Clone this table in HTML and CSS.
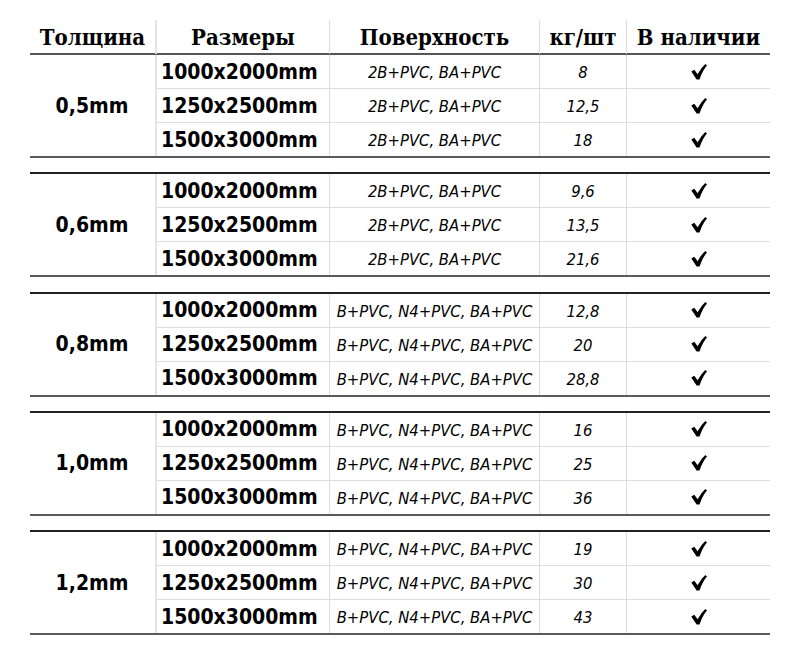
FILE: index.html
```html
<!DOCTYPE html>
<html lang="ru">
<head>
<meta charset="utf-8">
<title>Таблица</title>
<link rel="stylesheet" href="styles.css">
</head>
<body>
<div class="table">
  <div class="head">
    <div class="hc c1">Толщина</div>
    <div class="hc c2">Размеры</div>
    <div class="hc c3">Поверхность</div>
    <div class="hc c4">кг/шт</div>
    <div class="hc c5">В наличии</div>
  </div>

  <div class="group first">
    <div class="thick">0,5mm</div>
    <div class="size">1000x2000mm</div><div class="surf">2B+PVC, BA+PVC</div><div class="kg">8</div><div class="ok"><svg class="chk" viewBox="0 0 16 16"><path d="M0.3 7.6 L3.3 5.7 L6.6 10.3 Q10 3.8 14.3 0 L16 1.4 Q11.6 6.2 8.5 15.4 L5.6 15.4 Z"/></svg></div>
    <div class="size">1250x2500mm</div><div class="surf">2B+PVC, BA+PVC</div><div class="kg">12,5</div><div class="ok"><svg class="chk" viewBox="0 0 16 16"><path d="M0.3 7.6 L3.3 5.7 L6.6 10.3 Q10 3.8 14.3 0 L16 1.4 Q11.6 6.2 8.5 15.4 L5.6 15.4 Z"/></svg></div>
    <div class="size last">1500x3000mm</div><div class="surf last">2B+PVC, BA+PVC</div><div class="kg last">18</div><div class="ok last"><svg class="chk" viewBox="0 0 16 16"><path d="M0.3 7.6 L3.3 5.7 L6.6 10.3 Q10 3.8 14.3 0 L16 1.4 Q11.6 6.2 8.5 15.4 L5.6 15.4 Z"/></svg></div>
  </div>

  <div class="group">
    <div class="thick">0,6mm</div>
    <div class="size">1000x2000mm</div><div class="surf">2B+PVC, BA+PVC</div><div class="kg">9,6</div><div class="ok"><svg class="chk" viewBox="0 0 16 16"><path d="M0.3 7.6 L3.3 5.7 L6.6 10.3 Q10 3.8 14.3 0 L16 1.4 Q11.6 6.2 8.5 15.4 L5.6 15.4 Z"/></svg></div>
    <div class="size">1250x2500mm</div><div class="surf">2B+PVC, BA+PVC</div><div class="kg">13,5</div><div class="ok"><svg class="chk" viewBox="0 0 16 16"><path d="M0.3 7.6 L3.3 5.7 L6.6 10.3 Q10 3.8 14.3 0 L16 1.4 Q11.6 6.2 8.5 15.4 L5.6 15.4 Z"/></svg></div>
    <div class="size last">1500x3000mm</div><div class="surf last">2B+PVC, BA+PVC</div><div class="kg last">21,6</div><div class="ok last"><svg class="chk" viewBox="0 0 16 16"><path d="M0.3 7.6 L3.3 5.7 L6.6 10.3 Q10 3.8 14.3 0 L16 1.4 Q11.6 6.2 8.5 15.4 L5.6 15.4 Z"/></svg></div>
  </div>

  <div class="group">
    <div class="thick">0,8mm</div>
    <div class="size">1000x2000mm</div><div class="surf">B+PVC, N4+PVC, BA+PVC</div><div class="kg">12,8</div><div class="ok"><svg class="chk" viewBox="0 0 16 16"><path d="M0.3 7.6 L3.3 5.7 L6.6 10.3 Q10 3.8 14.3 0 L16 1.4 Q11.6 6.2 8.5 15.4 L5.6 15.4 Z"/></svg></div>
    <div class="size">1250x2500mm</div><div class="surf">B+PVC, N4+PVC, BA+PVC</div><div class="kg">20</div><div class="ok"><svg class="chk" viewBox="0 0 16 16"><path d="M0.3 7.6 L3.3 5.7 L6.6 10.3 Q10 3.8 14.3 0 L16 1.4 Q11.6 6.2 8.5 15.4 L5.6 15.4 Z"/></svg></div>
    <div class="size last">1500x3000mm</div><div class="surf last">B+PVC, N4+PVC, BA+PVC</div><div class="kg last">28,8</div><div class="ok last"><svg class="chk" viewBox="0 0 16 16"><path d="M0.3 7.6 L3.3 5.7 L6.6 10.3 Q10 3.8 14.3 0 L16 1.4 Q11.6 6.2 8.5 15.4 L5.6 15.4 Z"/></svg></div>
  </div>

  <div class="group">
    <div class="thick">1,0mm</div>
    <div class="size">1000x2000mm</div><div class="surf">B+PVC, N4+PVC, BA+PVC</div><div class="kg">16</div><div class="ok"><svg class="chk" viewBox="0 0 16 16"><path d="M0.3 7.6 L3.3 5.7 L6.6 10.3 Q10 3.8 14.3 0 L16 1.4 Q11.6 6.2 8.5 15.4 L5.6 15.4 Z"/></svg></div>
    <div class="size">1250x2500mm</div><div class="surf">B+PVC, N4+PVC, BA+PVC</div><div class="kg">25</div><div class="ok"><svg class="chk" viewBox="0 0 16 16"><path d="M0.3 7.6 L3.3 5.7 L6.6 10.3 Q10 3.8 14.3 0 L16 1.4 Q11.6 6.2 8.5 15.4 L5.6 15.4 Z"/></svg></div>
    <div class="size last">1500x3000mm</div><div class="surf last">B+PVC, N4+PVC, BA+PVC</div><div class="kg last">36</div><div class="ok last"><svg class="chk" viewBox="0 0 16 16"><path d="M0.3 7.6 L3.3 5.7 L6.6 10.3 Q10 3.8 14.3 0 L16 1.4 Q11.6 6.2 8.5 15.4 L5.6 15.4 Z"/></svg></div>
  </div>

  <div class="group">
    <div class="thick">1,2mm</div>
    <div class="size">1000x2000mm</div><div class="surf">B+PVC, N4+PVC, BA+PVC</div><div class="kg">19</div><div class="ok"><svg class="chk" viewBox="0 0 16 16"><path d="M0.3 7.6 L3.3 5.7 L6.6 10.3 Q10 3.8 14.3 0 L16 1.4 Q11.6 6.2 8.5 15.4 L5.6 15.4 Z"/></svg></div>
    <div class="size">1250x2500mm</div><div class="surf">B+PVC, N4+PVC, BA+PVC</div><div class="kg">30</div><div class="ok"><svg class="chk" viewBox="0 0 16 16"><path d="M0.3 7.6 L3.3 5.7 L6.6 10.3 Q10 3.8 14.3 0 L16 1.4 Q11.6 6.2 8.5 15.4 L5.6 15.4 Z"/></svg></div>
    <div class="size last">1500x3000mm</div><div class="surf last">B+PVC, N4+PVC, BA+PVC</div><div class="kg last">43</div><div class="ok last"><svg class="chk" viewBox="0 0 16 16"><path d="M0.3 7.6 L3.3 5.7 L6.6 10.3 Q10 3.8 14.3 0 L16 1.4 Q11.6 6.2 8.5 15.4 L5.6 15.4 Z"/></svg></div>
  </div>
</div>
</body>
</html>
```

FILE: styles.css
```css
html, body {
  margin: 0;
  padding: 0;
  background: #ffffff;
}

body {
  color: #000;
}

.table {
  width: 740px;
  margin-left: 30px;
  padding-top: 20px;
}

.head,
.group {
  display: grid;
  grid-template-columns: 125px 174px 210px 87px 144px;
}

.head {
  height: 35px;
  box-sizing: border-box;
  border-bottom: 2px solid #555;
}

.hc {
  font-family: "DejaVu Serif Condensed", "DejaVu Serif", serif;
  font-stretch: semi-condensed;
  font-weight: bold;
  font-size: 22px;
  line-height: 33px;
  text-align: center;
  padding-top: 1px;
  box-sizing: border-box;
  white-space: nowrap;
}

.hc.c2 { border-left: 2px solid #e4e4e4; }
.hc.c3 { border-left: 1px solid #dcdcdc; }
.hc.c4 { border-left: 1px solid #dcdcdc; }
.hc.c5 { border-left: 1px solid #dcdcdc; }

.group {
  grid-template-rows: 34px 34px 33px;
  border-top: 2px solid #222;
  border-bottom: 2px solid #5a5a5a;
  margin-top: 14.33px;
}

.group.first {
  border-top: none;
  margin-top: 0;
}

.thick {
  grid-row: 1 / span 3;
  grid-column: 1;
  display: flex;
  align-items: center;
  justify-content: center;
  font-family: "DejaVu Sans Condensed", "DejaVu Sans", sans-serif;
  font-stretch: semi-condensed;
  font-weight: bold;
  font-size: 21px;
  padding-right: 1px;
}

.size,
.surf,
.kg,
.ok {
  box-sizing: border-box;
  border-bottom: 1px solid #dedede;
  display: flex;
  align-items: center;
  white-space: nowrap;
}

.size.last,
.surf.last,
.kg.last,
.ok.last {
  border-bottom: none;
}

.size {
  border-left: 2px solid #e4e4e4;
  padding-left: 4px;
  font-family: "DejaVu Sans Condensed", "DejaVu Sans", sans-serif;
  font-stretch: semi-condensed;
  font-weight: bold;
  font-size: 21px;
}

.surf,
.kg {
  border-left: 1px solid #dcdcdc;
  justify-content: center;
  font-family: "DejaVu Sans Condensed", "DejaVu Sans", sans-serif;
  font-stretch: semi-condensed;
  font-style: italic;
  font-size: 16.5px;
  padding-top: 2px;
}

.ok {
  border-left: 1px solid #dcdcdc;
  justify-content: center;
}

.chk {
  width: 16px;
  height: 16px;
  fill: #000;
  margin-left: 1px;
}
```
